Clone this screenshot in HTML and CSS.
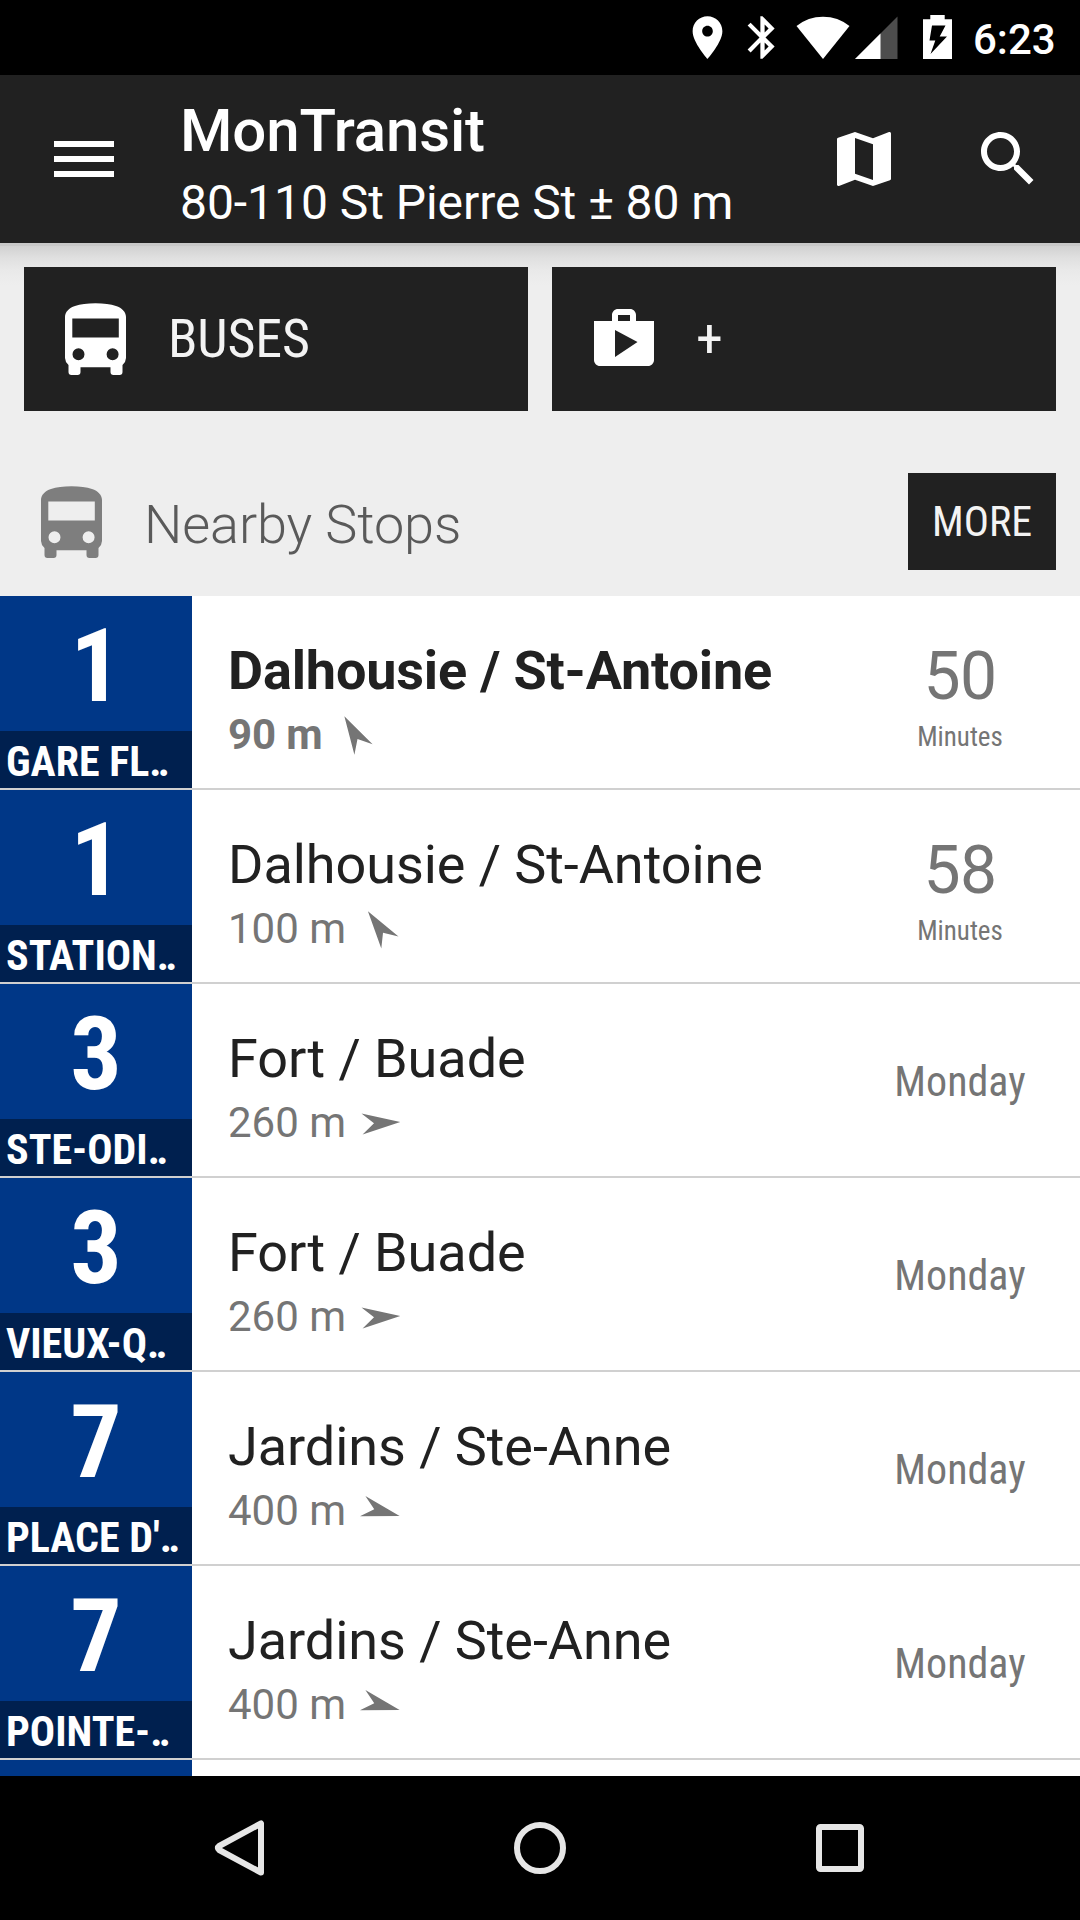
FILE: index.html
```html
<!DOCTYPE html>
<html lang="en">
<head>
<meta charset="utf-8">
<title>MonTransit</title>
<link rel="stylesheet" href="styles.css">
</head>
<body>
<svg class="defs" aria-hidden="true">
  <symbol id="bus" viewBox="0 0 72 72"><path fill-rule="evenodd" d="M5 14C5 9 9 5 15 3Q23 .3 35.500 .3T56 3C62 5 66 9 66 14V55Q66 58.500 62.500 62V69Q62.500 72 59.500 72H53.500Q50.500 72 50.500 69V64.300H20.500V69Q20.500 72 17.500 72H11.500Q8.500 72 8.500 69V62Q5 58.500 5 55ZM12.300 15.500V34.500H58.800V15.500ZM12.500 51.300a6 6 0 1 0 12 0a6 6 0 1 0-12 0M46.600 51.300a6 6 0 1 0 12 0a6 6 0 1 0-12 0"/></symbol>
  <symbol id="arrow" viewBox="0 0 42 42"><path d="M21 1.700L31.500 40L21 28L10.500 40Z"/></symbol>
</svg>
<div class="screen">
  <div class="status">
    <svg class="pin" viewBox="0 0 24 24"><path d="M12 2C8.130 2 5 5.130 5 9c0 5.250 7 13 7 13s7-7.750 7-13c0-3.870-3.130-7-7-7zm0 9.500c-1.380 0-2.500-1.120-2.500-2.500s1.120-2.500 2.500-2.500 2.500 1.120 2.500 2.500-1.120 2.500-2.500 2.500z"/></svg>
    <svg class="bt" viewBox="0 0 24 24"><path d="M17.710 7.710L12 2h-1v7.590L6.410 5 5 6.410 10.590 12 5 17.590 6.410 19 11 14.410V22h1l5.710-5.710-4.300-4.290 4.300-4.290zM13 5.830l1.880 1.880L13 9.590V5.830zm1.880 10.460L13 18.170v-3.760l1.880 1.880z"/></svg>
    <svg class="wifi" viewBox="0 0 54 44"><path d="M.5 10Q12 .7 27 .7T53.500 10L27 43Z"/></svg>
    <svg class="signal" viewBox="0 0 44 44"><path fill="#4d4d4d" d="M1 43L43.500 .5V43Z"/><path d="M1 43L26.500 17.500V43Z"/></svg>
    <svg class="battery" viewBox="0 0 29 44"><path fill-rule="evenodd" d="M7.300 0H21.700V4.300H29V44H0V4.300H7.300ZM9 10.500L6.500 25.500H12.300L7.500 39L24 21.500H16.700L22.500 10.500Z"/></svg>
    <span class="clock">6:23</span>
  </div>
  <div class="appbar">
    <div class="menu"><i></i><i></i><i></i></div>
    <div class="titles"><div class="title">MonTransit</div><div class="subtitle">80-110 St Pierre St ± 80 m</div></div>
    <svg class="action" viewBox="0 0 24 24"><path d="M20.500 3l-.16.03L15 5.100 9 3 3.360 4.900c-.21.07-.36.25-.36.480V20.500c0 .28.22.5.5.5l.16-.03L9 18.900l6 2.100 5.640-1.900c.21-.07.36-.25.36-.48V3.500c0-.28-.22-.5-.5-.5zM15 19l-6-2.110V5l6 2.110V19z"/></svg>
    <svg class="action" viewBox="0 0 24 24"><path d="M15.500 14h-.79l-.28-.27C15.410 12.590 16 11.110 16 9.500 16 5.910 13.090 3 9.500 3S3 5.910 3 9.500 5.910 16 9.500 16c1.610 0 3.090-.59 4.230-1.570l.27.28v.79l5 4.990L20.490 19l-4.990-5zm-6 0C7.010 14 5 11.990 5 9.500S7.010 5 9.500 5 14 7.010 14 9.500 11.990 14 9.500 14z"/></svg>
  </div>
  <div class="content">
    <div class="tiles">
      <div class="tile"><svg class="ico"><use href="#bus"/></svg><span>BUSES</span></div>
      <div class="tile"><svg class="ico" viewBox="0 0 24 24"><path d="M16 6V4c0-1.110-.89-2-2-2h-4c-1.110 0-2 .89-2 2v2H2v13c0 1.110.89 2 2 2h16c1.110 0 2-.89 2-2V6h-6zm-6-2h4v2h-4V4zM9 18V9l7.500 4L9 18z"/></svg><span>+</span></div>
    </div>
    <div class="section"><svg class="ico"><use href="#bus"/></svg><span class="heading">Nearby Stops</span><span class="more">MORE</span></div>
    <div class="list">
      <div class="row nearest"><div class="route"><div class="num">1</div><div class="dir">GARE FL‥</div></div><div class="stop"><div class="name">Dalhousie / St-Antoine</div><div class="dist">90 m<svg class="arrow nw"><use href="#arrow"/></svg></div></div><div class="when"><div class="count">50</div><div class="unit">Minutes</div></div></div>
      <div class="row"><div class="route"><div class="num">1</div><div class="dir">STATION‥</div></div><div class="stop"><div class="name">Dalhousie / St-Antoine</div><div class="dist">100 m<svg class="arrow nww"><use href="#arrow"/></svg></div></div><div class="when"><div class="count">58</div><div class="unit">Minutes</div></div></div>
      <div class="row"><div class="route"><div class="num">3</div><div class="dir">STE-ODI‥</div></div><div class="stop"><div class="name">Fort / Buade</div><div class="dist">260 m<svg class="arrow east"><use href="#arrow"/></svg></div></div><div class="when day">Monday</div></div>
      <div class="row"><div class="route"><div class="num">3</div><div class="dir">VIEUX-Q‥</div></div><div class="stop"><div class="name">Fort / Buade</div><div class="dist">260 m<svg class="arrow east"><use href="#arrow"/></svg></div></div><div class="when day">Monday</div></div>
      <div class="row"><div class="route"><div class="num">7</div><div class="dir">PLACE D'‥</div></div><div class="stop"><div class="name">Jardins / Ste-Anne</div><div class="dist">400 m<svg class="arrow ese"><use href="#arrow"/></svg></div></div><div class="when day">Monday</div></div>
      <div class="row"><div class="route"><div class="num">7</div><div class="dir">POINTE-‥</div></div><div class="stop"><div class="name">Jardins / Ste-Anne</div><div class="dist">400 m<svg class="arrow ese"><use href="#arrow"/></svg></div></div><div class="when day">Monday</div></div>
      <div class="row"><div class="route"></div></div>
    </div>
  </div>
  <div class="nav">
    <svg viewBox="0 0 60 60"><path d="M51 5.500V54.500L9.200 32Q6.500 30 9.200 28Z"/></svg>
    <svg viewBox="0 0 60 60"><circle cx="30" cy="30" r="23"/></svg>
    <svg viewBox="0 0 60 60"><rect x="9" y="9" width="42" height="42" rx="1.500"/></svg>
  </div>
</div>
</body>
</html>
```
FILE: styles.css
```css
* { box-sizing: border-box; }
body { margin: 0; font-family: Roboto, sans-serif; background: #000; }
svg { display: block; flex: none; fill: currentColor; }
.defs { display: none; }
.screen { width: 1080px; height: 1920px; display: flex; flex-direction: column; overflow: hidden; }

.status { flex: none; height: 75px; padding-right: 24px; display: flex; justify-content: flex-end; align-items: flex-start; color: #fff; }
.pin, .bt { width: 51px; height: 51px; margin-top: 12px; }
.bt { margin-left: 4px; }
.wifi { width: 54px; height: 44px; margin: 16px 0 0 8px; }
.signal { width: 44px; height: 44px; margin: 16px 0 0 4px; }
.battery { width: 29px; height: 44px; margin: 15px 0 0 25px; }
.clock { width: 83px; margin-left: 21px; font-size: 42px; font-weight: 500; line-height: 79px; white-space: nowrap; }

.appbar { flex: none; height: 168px; padding: 0 36px; display: flex; align-items: center; background: #212121; color: #fff; }
.menu { width: 60px; margin: 0 66px 0 18px; display: flex; flex-direction: column; gap: 9px; }
.menu i { height: 6px; background: #fff; }
.titles { flex: 1; align-self: flex-start; padding-top: 20px; line-height: 72px; white-space: nowrap; }
.title { font-size: 60px; font-weight: 500; letter-spacing: -.15px; }
.subtitle { font-size: 48px; letter-spacing: -.05px; }
.action { width: 72px; height: 72px; }
.action + .action { margin-left: 72px; }

.content { flex: 1; min-height: 0; overflow: hidden; background: linear-gradient(#c8c8c8 3px, #d1d1d1 3px, #e0e0e0 15px, #e9e9e9 27px, #eee 42px); display: flex; flex-direction: column; }
.tiles { display: grid; grid-template-columns: 1fr 1fr; gap: 24px; padding: 24px 24px 0; }
.tile { height: 144px; padding-left: 36px; display: flex; align-items: center; gap: 36px; background: #212121; color: #fff; font: 400 54px "Roboto Condensed", Roboto, sans-serif; font-stretch: 75%; }
.tile span, .more { color: #f3f3f3; }
.tile span { padding-bottom: 2px; letter-spacing: -.15px; }
.ico { width: 72px; height: 72px; }
.section { flex: none; height: 185px; padding: 36px 24px 0 36px; display: flex; align-items: center; gap: 36px; color: #7e7e7e; }
.heading { flex: 1; font-size: 54px; font-weight: 300; color: #5a5a5a; padding-top: 5px; letter-spacing: -.1px; }
.more { width: 148px; height: 97px; line-height: 97px; text-align: center; background: #212121; font-family: "Roboto Condensed", Roboto, sans-serif; font-stretch: 75%; font-size: 42px; }

.row { height: 194px; border-bottom: 2px solid #d0d0d0; display: flex; background: #fff; white-space: nowrap; }
.route { width: 192px; background: #003787; color: #fff; font-family: "Roboto Condensed", Roboto, sans-serif; font-stretch: 75%; font-weight: 700; text-align: center; }
.num { height: 135px; line-height: 141px; font-size: 102px; }
.dir { height: 57px; line-height: 61px; padding-left: 6px; font-size: 42px; text-align: left; background: #00204f; }
.stop { flex: 1; padding: 43px 0 0 36px; line-height: 64px; }
.name { font-size: 54px; letter-spacing: -.06px; color: #212121; }
.dist { display: flex; align-items: center; gap: 14px; font-size: 42px; color: #757575; }
.nearest .name, .nearest .dist { font-weight: 700; letter-spacing: -.16px; }
.arrow { width: 42px; height: 42px; }
.nw { margin: -5px 0 0 -3px; transform: rotate(-30deg); }
.nww { margin: -5px 0 0 -2px; transform: rotate(-35deg); }
.east { transform: rotate(87deg); }
.ese { transform: rotate(105deg); }
.when { width: 240px; padding-top: 41px; text-align: center; color: #757575; font-family: "Roboto Condensed", Roboto, sans-serif; font-stretch: 75%; }
.count { font-size: 66px; line-height: 80px; font-family: Roboto, sans-serif; font-stretch: 100%; letter-spacing: -.5px; }
.unit { font-size: 27px; line-height: 40px; }
.day { padding-top: 0; font-size: 42px; line-height: 195px; }

.nav { flex: none; height: 144px; display: flex; justify-content: center; align-items: center; gap: 240px; }
.nav svg { width: 60px; height: 60px; fill: none; stroke: #e6e6e6; stroke-width: 6px; stroke-linejoin: round; }
```
